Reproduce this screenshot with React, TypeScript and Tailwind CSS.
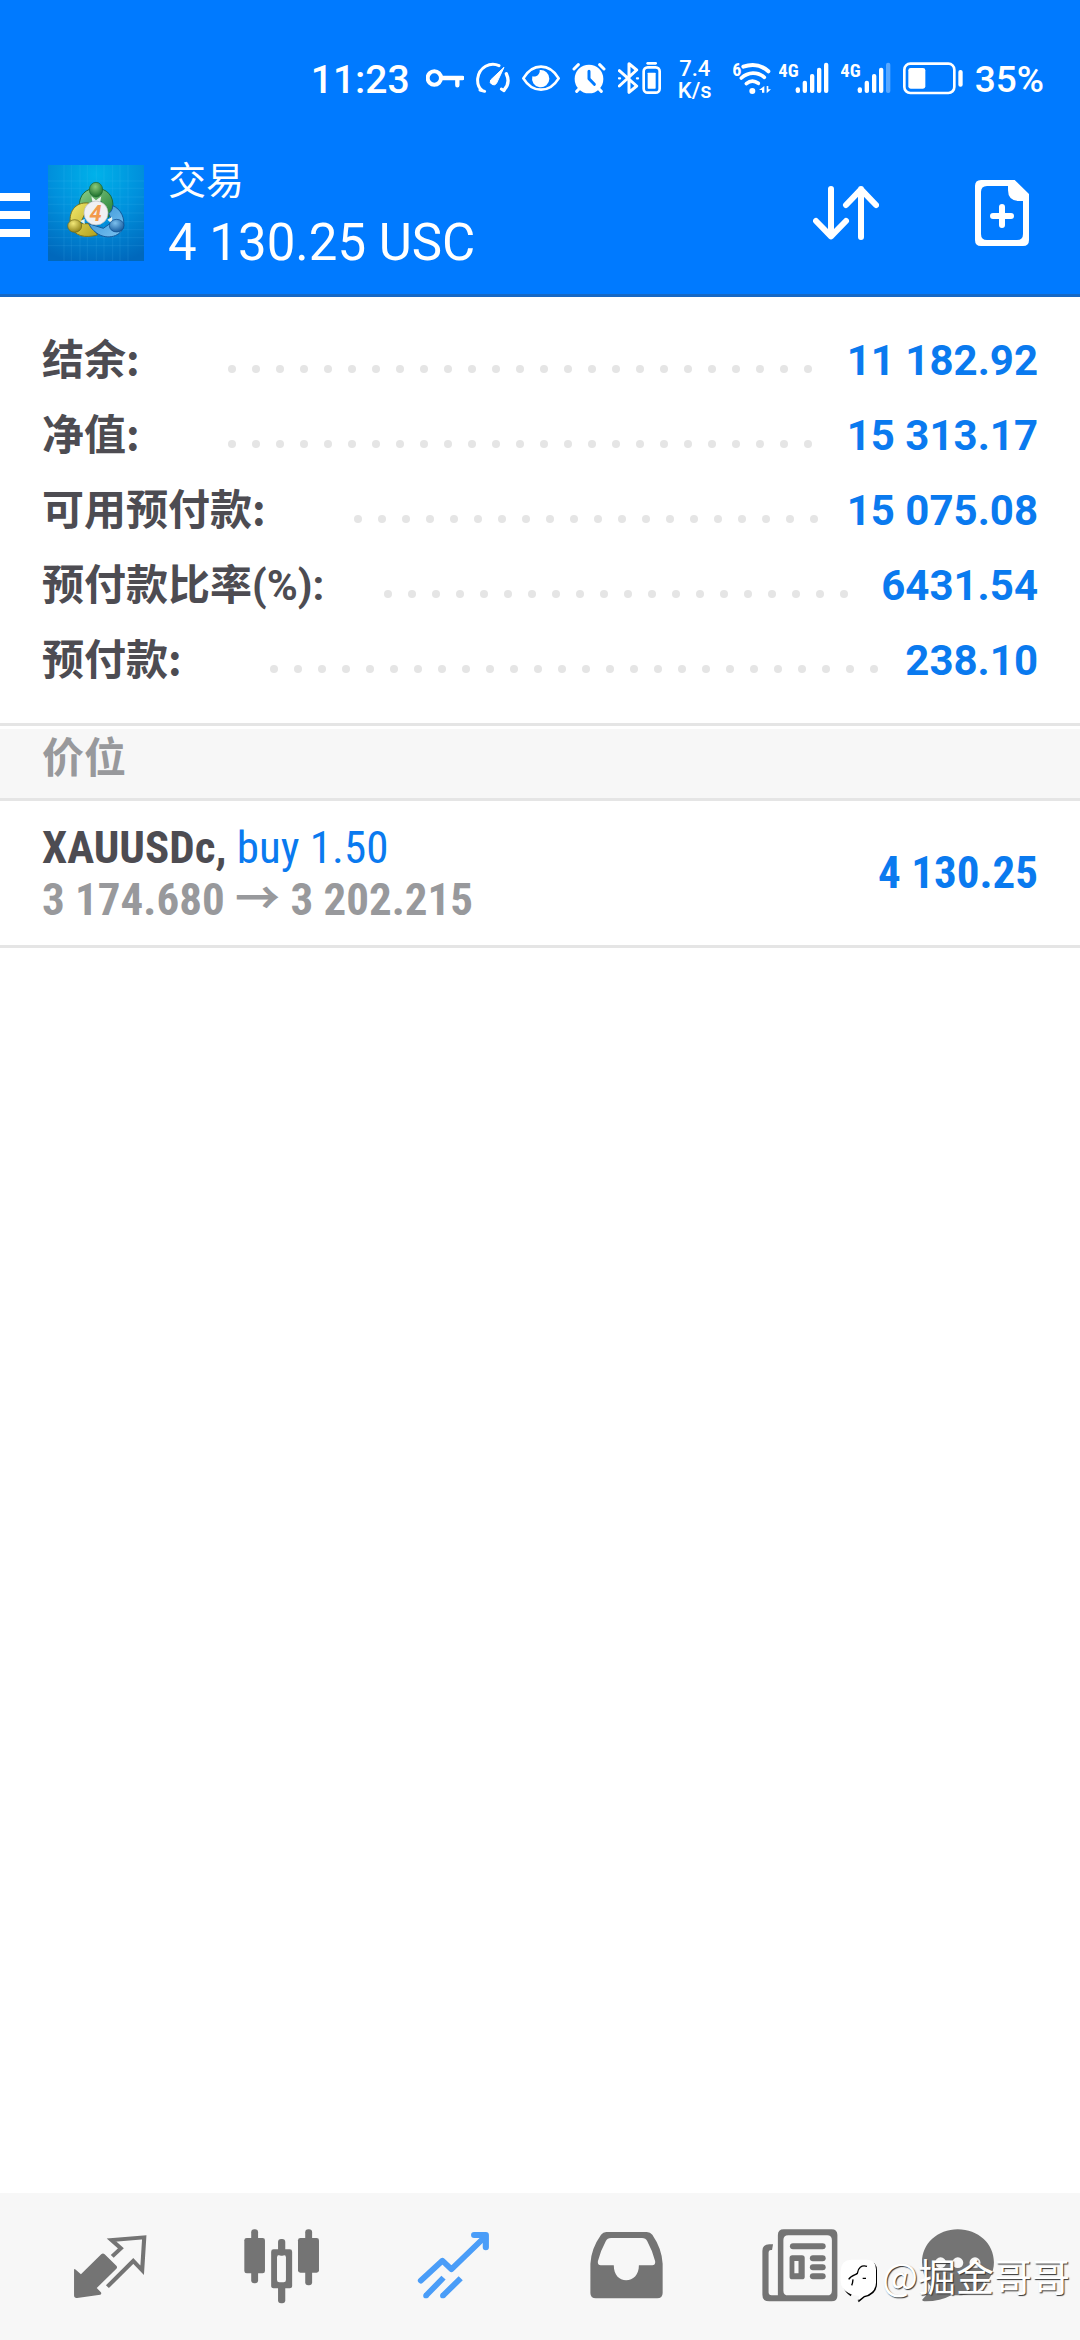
import type { ReactNode } from "react";

const account = [
  { label: "结余:", value: "11 182.92", leader: "ml-20" },
  { label: "净值:", value: "15 313.17", leader: "ml-20" },
  { label: "可用预付款:", value: "15 075.08", leader: "ml-20" },
  { label: "预付款比率", suffix: "(%):", value: "6431.54", leader: "ml-13" },
  { label: "预付款:", value: "238.10", leader: "ml-20" },
];

const dots = Array.from({ length: 60 }, (_, i) => i);

function StatusBar() {
  return (
    <div className="flex items-center justify-end gap-3 pt-15 pr-9 h-25">
      <span className="text-[39px] leading-10 font-medium mr-1">11:23</span>

      {/* vpn key */}
      <svg className="w-[38px] h-10" viewBox="390 60 114 120" fill="none" stroke="currentColor">
        <circle cx="415" cy="114" r="20" strokeWidth="12" />
        <path d="M437 114H500M484 114V136" strokeWidth="13" strokeLinecap="round" />
      </svg>

      {/* speed gauge */}
      <svg className="w-[34px] h-10" viewBox="539 60 102 120" fill="none" stroke="currentColor">
        <path d="M556 150C546 142 543 130 544 116C548 82 582 64 608 77" strokeWidth="9" strokeLinecap="round" />
        <path d="M630 101C638 118 636 136 624 149" strokeWidth="10" strokeLinecap="round" />
        <path d="M551 150l14 4M615 147l8 5" strokeWidth="9" strokeLinecap="round" />
        <path d="M623 82L601 129A10 10 0 1 1 583 120Z" fill="currentColor" strokeWidth="3" strokeLinejoin="round" />
      </svg>

      {/* eye comfort */}
      <svg className="w-[38px] h-10" viewBox="675 60 114 120" fill="none" stroke="currentColor">
        <path d="M679 115C693 92 712 80 732 80S771 92 785 115C771 138 752 149 732 149S693 138 679 115Z" strokeWidth="8" strokeLinejoin="round" />
        <path d="M728 90A26 26 0 1 1 706 109A17 17 0 0 0 728 90Z" fill="currentColor" stroke="none" />
      </svg>

      {/* alarm */}
      <svg className="w-[34px] h-10" viewBox="822 60 102 120">
        <circle cx="873" cy="117" r="43" fill="currentColor" />
        <path d="M828 87L841 74M905 74L918 87M836 154l8-8M910 154l-8-8" stroke="currentColor" strokeWidth="9" strokeLinecap="round" fill="none" />
        <path d="M873 94V116L889 133" stroke="#007aff" strokeWidth="9" strokeLinecap="round" strokeLinejoin="round" fill="none" />
      </svg>

      {/* bluetooth with device battery */}
      <svg className="w-[43px] h-10" viewBox="955 60 129 120" fill="none" stroke="currentColor" strokeLinejoin="round" strokeLinecap="round">
        <path d="M959 92L1011 138L988 157V71L1011 90L959 138" strokeWidth="9" />
        <path d="M958 115h3M1012 115h3" strokeWidth="7" />
        <rect x="1032" y="82" width="48" height="76" rx="12" strokeWidth="8" />
        <rect x="1044" y="98" width="24" height="48" rx="2" fill="currentColor" stroke="none" />
        <path d="M1044 70H1068" strokeWidth="8" />
      </svg>

      <span className="ml-1 mr-2 w-9 text-[22px] leading-[22px] font-medium text-center">
        7.4
        <br />
        K/s
      </span>

      {/* wifi */}
      <svg className="w-[38px] h-10 -mr-1" viewBox="220 60 114 120" fill="none" stroke="currentColor">
        <text x="218" y="107" fontSize="54" stroke="none" fill="currentColor" className="font-['Roboto_Condensed','Roboto'] font-bold">6</text>
        <path d="M251 80C280 70 306 76 326 94" strokeWidth="12" strokeLinecap="round" />
        <path d="M245 114C266 95 294 95 314 112" strokeWidth="11" strokeLinecap="round" />
        <path d="M260 131C271 122 285 122 296 130" strokeWidth="11" strokeLinecap="round" />
        <circle cx="278" cy="153" r="9" fill="currentColor" stroke="none" />
        <path d="M298 150L314 138V158H307V150ZM334 148L321 160V138H326V148Z" fill="currentColor" stroke="none" />
      </svg>

      <svg className="w-[50px] h-10" viewBox="360 60 150 120" fill="currentColor">
        <text x="358" y="110" fontSize="56" className="font-['Roboto_Condensed','Roboto'] font-bold">4G</text>
        <rect x="410" y="142" width="13" height="17" rx="6" />
        <rect x="431" y="122" width="13" height="37" rx="6" />
        <rect x="453" y="102" width="13" height="57" rx="6" />
        <rect x="474" y="83" width="13" height="76" rx="6" />
        <rect x="495" y="68" width="13" height="91" rx="6" />
      </svg>

      <svg className="w-[50px] h-10" viewBox="542 60 150 120" fill="currentColor">
        <text x="540" y="110" fontSize="56" className="font-['Roboto_Condensed','Roboto'] font-bold">4G</text>
        <rect x="592" y="142" width="13" height="17" rx="6" />
        <rect x="613" y="122" width="13" height="37" rx="6" />
        <rect x="635" y="102" width="13" height="57" rx="6" />
        <rect x="656" y="83" width="13" height="76" rx="6" />
        <rect x="677" y="68" width="13" height="91" rx="6" opacity="0.35" />
      </svg>

      {/* battery */}
      <svg className="w-[60px] h-10" viewBox="728 60 180 120">
        <rect x="732" y="71" width="150" height="88" rx="18" fill="none" stroke="currentColor" strokeWidth="8" />
        <rect x="744" y="84" width="51" height="62" rx="7" fill="currentColor" />
        <rect x="894" y="90" width="13" height="50" rx="6" fill="currentColor" />
      </svg>

      <span className="text-[37px] leading-10 font-medium">35%</span>
    </div>
  );
}

function AppLogo() {
  return (
    <svg className="size-24 shrink-0" viewBox="12 14 288 288" role="img" aria-label="MetaTrader 4">
      <defs>
        <radialGradient id="sky" cx="0.5" cy="0.1" r="0.95">
          <stop offset="0" stopColor="#00b2ea" />
          <stop offset="0.5" stopColor="#0090dc" />
          <stop offset="1" stopColor="#0068bc" />
        </radialGradient>
        <linearGradient id="green" x1="0" y1="0" x2="1" y2="1">
          <stop offset="0" stopColor="#8fd08c" />
          <stop offset="1" stopColor="#1f7f33" />
        </linearGradient>
        <linearGradient id="yellow" x1="0" y1="0" x2="1" y2="1">
          <stop offset="0" stopColor="#f4ea6c" />
          <stop offset="1" stopColor="#b0a01c" />
        </linearGradient>
        <linearGradient id="blue" x1="0" y1="0" x2="1" y2="1">
          <stop offset="0" stopColor="#2f8fd4" />
          <stop offset="1" stopColor="#7cc4f2" />
        </linearGradient>
        <radialGradient id="greenBall" cx="0.45" cy="0.3" r="0.7">
          <stop offset="0" stopColor="#8ccb7c" />
          <stop offset="1" stopColor="#1a6e2a" />
        </radialGradient>
        <radialGradient id="yellowBall" cx="0.4" cy="0.3" r="0.8">
          <stop offset="0" stopColor="#f2e878" />
          <stop offset="1" stopColor="#84760c" />
        </radialGradient>
        <radialGradient id="blueBall" cx="0.4" cy="0.3" r="0.8">
          <stop offset="0" stopColor="#7cc0ee" />
          <stop offset="1" stopColor="#0a4f94" />
        </radialGradient>
      </defs>
      <rect x="12" y="14" width="288" height="288" fill="url(#sky)" />
      <path
        d="M60 14V302M82 14V302M108 14V302M130 14V302M157 14V302M180 14V302M206 14V302M228 14V302M252 14V302M12 62H300M12 84H300M12 110H300M12 132H300M12 158H300M12 184H300M12 208H300M12 232H300M12 256H300"
        stroke="#5cc8f4"
        strokeOpacity="0.2"
        strokeWidth="2"
      />
      <path d="M106 140C104 104 126 84 156 84S212 104 206 146C204 156 200 166 192 172L172 124H142L128 148Z" fill="url(#green)" stroke="#1c6a38" strokeWidth="3" />
      <path d="M134 128C92 124 72 156 80 196C90 228 124 234 160 224L142 190H108L122 162Z" fill="url(#yellow)" stroke="#7a7420" strokeWidth="3" />
      <path d="M206 136C232 146 244 176 238 202C226 232 184 238 158 218C144 208 138 198 134 190L178 204L206 184L194 160C202 154 206 146 206 136Z" fill="url(#blue)" stroke="#145a9c" strokeWidth="3" />
      <path d="M142 108L156 120L172 108L168 128H146ZM190 178L204 170L206 192ZM108 182L122 176V192Z" fill="#e8f4ee" />
      <ellipse cx="156" cy="88" rx="20" ry="22" fill="url(#greenBall)" stroke="#1a6430" strokeWidth="2" />
      <ellipse cx="92" cy="197" rx="21" ry="19" fill="url(#yellowBall)" stroke="#6c6418" strokeWidth="2" />
      <ellipse cx="218" cy="196" rx="22" ry="19" fill="url(#blueBall)" stroke="#0c4c8c" strokeWidth="2" />
      <circle cx="156" cy="158" r="36" fill="#f0f0f2" stroke="#b8bcc0" strokeWidth="2" />
      <text x="155" y="182" textAnchor="middle" fontSize="66" fill="#f39a4c" className="font-['Roboto'] font-bold italic">4</text>
    </svg>
  );
}

function Header() {
  return (
    <header className="bg-[#007aff] text-white border-b-3 border-[#1668c4]">
      <StatusBar />
      <div className="flex items-center h-[194px] pt-8 pr-[45px]">
        <button aria-label="菜单" className="flex flex-col gap-2.5 w-[30px] mr-[18px] pt-1">
          <span className="block h-2 w-full bg-white" />
          <span className="block h-2 w-full bg-white" />
          <span className="block h-2 w-full bg-white" />
        </button>
        <AppLogo />
        <div className="flex-1 ml-6 pt-2">
          <h1 className="text-[38px] leading-13">交易</h1>
          <p className="text-[51px] leading-18">4 130.25 USC</p>
        </div>
        <div className="flex gap-[90px]">
          <button aria-label="排序">
            <svg className="size-[66px]" viewBox="99 120 198 198" fill="none" stroke="currentColor" strokeWidth="18" strokeLinecap="round" strokeLinejoin="round">
              <path d="M153 147V289M108 243L153 289L198 243" />
              <path d="M243 291V147M198 195L243 148L288 195" />
            </svg>
          </button>
          <button aria-label="新订单">
            <svg className="size-[66px]" viewBox="567 120 198 198">
              <path
                fill="currentColor"
                fillRule="evenodd"
                d="M603 120H704L747 162V300Q747 318 729 318H603Q585 318 585 300V138Q585 120 603 120ZM621 138Q603 138 603 156V282Q603 300 621 300H711Q729 300 729 282V183H716Q684 182 684 150V138Z"
              />
              <path d="M666 201V255M639 228H693" stroke="currentColor" strokeWidth="18" strokeLinecap="round" />
            </svg>
          </button>
        </div>
      </div>
    </header>
  );
}

function AccountSummary() {
  return (
    <dl className="px-[42px] pt-[26px] pb-[25px] text-[42px] leading-[75px]">
      {account.map((row) => (
        <div key={row.label} className="flex items-baseline h-[75px]">
          <dt className="font-['Noto_Sans_CJK_SC',sans-serif] font-bold leading-none text-[#4d4c52]">
            {row.label}
            {row.suffix && <span className="font-['Roboto',sans-serif]">{row.suffix}</span>}
          </dt>
          <div aria-hidden="true" className={`flex flex-1 flex-wrap self-center h-6 overflow-hidden mr-3 ${row.leader}`}>
            {dots.map((i) => (
              <span key={i} className="flex items-end justify-center size-6">
                <span className="size-2 rounded-full bg-[#e5e5e5]" />
              </span>
            ))}
          </div>
          <dd className="font-bold text-[#0a7aef]">{row.value}</dd>
        </div>
      ))}
    </dl>
  );
}

function Positions() {
  return (
    <section>
      <div className="border-y-3 border-[#e5e5e5] pt-[3px]">
        <h2 className="h-[69px] px-[42px] bg-[#f7f7f7] text-[42px] leading-[60px] font-bold text-[#98999c]">价位</h2>
      </div>
      <div className="flex items-center justify-between h-[147px] px-[42px] border-b-3 border-[#e5e5e5] font-['Roboto_Condensed','Roboto',sans-serif] text-[45px] font-bold">
        <div className="leading-[51px]">
          <p className="text-[#4d4c52]">
            XAUUSDc, <span className="font-normal text-[#0a7aef]">buy 1.50</span>
          </p>
          <p className="text-[#98999c]">
            3 174.680 <span className="font-['Noto_Sans_CJK_SC',sans-serif] leading-none">→</span> 3 202.215
          </p>
        </div>
        <p className="text-[#0a7aef]">4 130.25</p>
      </div>
    </section>
  );
}

function Tab({ label, box, active, children }: { label: string; box: string; active?: boolean; children: ReactNode }) {
  return (
    <a href="#" aria-label={label} className={`flex flex-1 justify-center ${active ? "text-[#4a9df8]" : "text-[#747474]"}`}>
      <svg className="size-24" viewBox={box} preserveAspectRatio="none" fill="currentColor">
        {children}
      </svg>
    </a>
  );
}

function TabBar() {
  return (
    <nav className="flex items-center h-[147px] px-6 bg-[#f7f7f7]">
      <Tab label="行情" box="180 116 279 288">
        <path d="M215 268Q216 264 220 268L235 282L294 222Q299 217 304 222L338 256Q342 261 338 265L281 323L293 336Q296 341 291 343L224 353Q215 354 215 345Z" />
        <path
          d="M326 228L351 204L324 179L419 171L413 270L387 242L312 319"
          fill="none"
          stroke="currentColor"
          strokeWidth="12"
        />
      </Tab>
      <Tab label="图表" box="679 116 279 288">
        <rect x="729" y="147" width="20" height="50" rx="9" />
        <rect x="729" y="260" width="20" height="49" rx="9" />
        <rect x="709" y="173" width="60" height="106" rx="7" />
        <rect x="807" y="176" width="21" height="50" rx="9" />
        <rect x="807" y="310" width="21" height="59" rx="9" />
        <path fillRule="evenodd" d="M794 207H841Q848 207 848 214V317Q848 324 841 324H794Q787 324 787 317V214Q787 207 794 207ZM811 224Q804 224 804 231V299Q804 306 811 306H823Q830 306 830 299V231Q830 224 823 224Z" />
        <rect x="886" y="147" width="20" height="50" rx="9" />
        <rect x="886" y="260" width="20" height="55" rx="9" />
        <rect x="865" y="173" width="61" height="104" rx="7" />
      </Tab>
      <Tab label="交易" box="1179 116 279 288" active>
        <g fill="none" stroke="currentColor" strokeLinejoin="round">
          <path d="M1222 301L1285 241L1311 267L1408 170" strokeWidth="17" strokeLinecap="round" />
          <path d="M1377 164H1411V201" strokeWidth="18" strokeLinecap="round" />
          <path d="M1288 292L1237 346M1338 294L1286 346" strokeWidth="17" />
        </g>
        <circle cx="1237" cy="346" r="8" />
        <circle cx="1286" cy="346" r="8" />
      </Tab>
      <Tab label="历史" box="110 116 279 288">
        <path
          fillRule="evenodd"
          d="M192 155H310Q320 155 326 163Q354 205 356 250V338Q356 354 340 354H162Q146 354 146 338V250Q148 205 177 163Q183 155 192 155ZM206 173Q195 173 191 182Q176 210 168 242Q166 254 176 255H214C214 284 230 300 250 300S287 284 287 255H326Q336 254 334 242Q326 210 311 182Q307 173 296 173Z"
        />
      </Tab>
      <Tab label="新闻" box="610 116 279 288">
        <path
          fillRule="evenodd"
          d="M708 147H847Q864 147 864 164V346Q864 363 847 363H666Q646 363 646 343V212Q646 192 666 192H677L674 209H671Q664 209 664 218V336Q664 345 673 345H691V164Q691 147 708 147ZM721 165Q707 165 707 179V331Q707 345 721 345H834Q848 345 848 331V179Q848 165 834 165Z"
        />
        <rect x="726" y="189" width="104" height="18" rx="9" />
        <path fillRule="evenodd" d="M733 225H761Q769 225 769 233V290Q769 297 761 297H733Q725 297 725 290V233Q725 225 733 225ZM739 242V279H751V242Z" />
        <rect x="784" y="225" width="46" height="18" rx="9" />
        <rect x="784" y="252" width="46" height="18" rx="9" />
        <rect x="784" y="279" width="46" height="18" rx="9" />
      </Tab>
      <Tab label="消息" box="1109 116 279 288">
        <path d="M1213 147C1272 147 1318 190 1318 246S1272 345 1213 345Q1204 345 1196 344Q1160 364 1115 363Q1106 361 1112 355Q1128 342 1134 318Q1109 288 1109 246C1109 190 1154 147 1213 147Z" />
        <circle cx="1163" cy="247" r="16" fill="#f7f7f7" />
        <circle cx="1213" cy="247" r="16" fill="#f7f7f7" />
        <circle cx="1263" cy="247" r="16" fill="#f7f7f7" />
      </Tab>
    </nav>
  );
}

function Watermark() {
  return (
    <div className="absolute right-2.5 bottom-9 flex items-center gap-1 text-white">
      <svg className="w-[38px] h-[46px] mt-3" viewBox="26 58 114 138">
        <path d="M110 66Q137 68 137 96V136Q136 168 100 176L82 191L79 184L100 166Q128 160 131 132L133 96ZM34 142Q40 160 58 173L62 166Z" fill="#000" />
        <path d="M60 63H108Q134 64 134 92V132Q132 164 98 172L80 186L84 172L62 168Q28 154 28 128V96Q30 64 60 63Z" fill="#fff" />
        <path d="M107 83C90 78 80 88 78 104C76 108 60 108 52 122M94 119H104M65 122Q64 134 61 140" fill="none" stroke="#000" strokeWidth="4" />
      </svg>
      <span className="font-['Noto_Sans_CJK_SC',sans-serif] text-[38px] leading-12 [text-shadow:1px_1px_1px_#333]">@掘金哥哥</span>
    </div>
  );
}

export default function App() {
  return (
    <div className="relative flex flex-col min-h-screen bg-white font-['Roboto','Noto_Sans_CJK_SC',sans-serif]">
      <Header />
      <main className="flex-1">
        <AccountSummary />
        <Positions />
      </main>
      <TabBar />
      <Watermark />
    </div>
  );
}
